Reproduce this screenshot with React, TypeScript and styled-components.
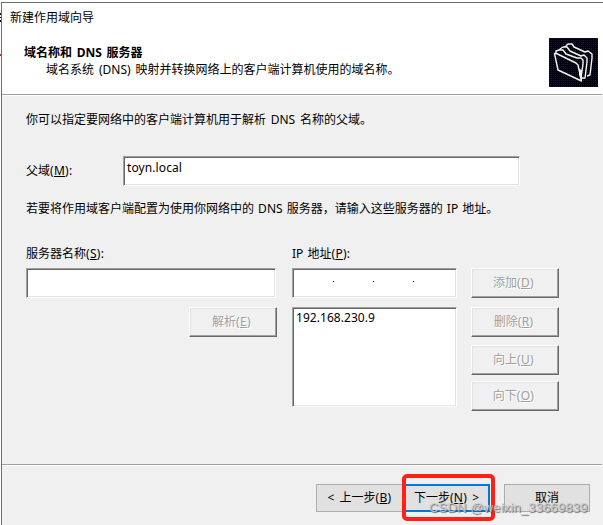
import React from "react";
import styled, { createGlobalStyle, css } from "styled-components";

const GlobalStyle = createGlobalStyle`
  html, body { margin: 0; padding: 0; overflow: hidden; background: #fff; }
  *, *::before, *::after { box-sizing: border-box; }
`;

const Screen = styled.div`
  position: relative;
  display: flex;
  width: 603px;
  height: 525px;
  overflow: hidden;
  background: #fff;
  color: #000;
  font: 12px/16px "Noto Sans", "Noto Sans CJK SC", sans-serif;
  white-space: nowrap;
`;

const Backdrop = styled.div`
  flex: none;
  width: 1px;
  padding-top: 13px;
`;

const BackdropMark = styled.div<{ $height: number; $color: string; $gap: number }>`
  height: ${(p) => p.$height}px;
  margin-bottom: ${(p) => p.$gap}px;
  background: ${(p) => p.$color};
`;

const Dialog = styled.div`
  display: flex;
  flex-direction: column;
  flex: 1;
  margin-top: 2px;
  border-top: 1px solid #6e6e72;
  border-left: 1px solid #6e6e72;
  background: #f0f0f0;
`;

const Header = styled.header`
  display: flex;
  justify-content: space-between;
  height: 91px;
  padding-right: 5px;
  background: #fff;
`;

const HeaderText = styled.div`
  padding: 7px 0 0 8px;
`;

const Line = styled.div<{ $spacing?: number }>`
  height: 16px;
  word-spacing: ${(p) => p.$spacing ?? 0}px;
`;

const Heading = styled(Line)`
  margin: 19px 0 0 14px;
  font-weight: 700;
`;

const Subtitle = styled(Line)`
  margin: 1px 0 0 36px;
`;

const FolderIcon = styled.svg`
  margin-top: 35px;
`;

const Rule = styled.div`
  flex: none;
  height: 2px;
  margin-right: 1px;
  border-top: 1px solid #a0a0a0;
  border-bottom: 1px solid #fff;
`;

const Body = styled.main`
  height: 368px;
  padding: 16px 0 0 24px;
`;

const ParentRow = styled.div`
  display: flex;
  height: 30px;
  margin: 28px 0 15px;
`;

const ParentLabel = styled.div`
  width: 97px;
  padding-top: 7px;
`;

const sunken = css`
  border: 1px solid;
  border-color: #a0a0a0 #fff #fff #a0a0a0;
  box-shadow: inset 1px 1px #696969, inset -1px -1px #e3e3e3;
  background: #fff;
`;

const Field = styled.div<{ $width: number; $height?: number }>`
  ${sunken}
  width: ${(p) => p.$width}px;
  height: ${(p) => p.$height ?? 30}px;
  padding: 3px 3px;
`;

const ParentField = styled(Field)`
  letter-spacing: 0.1px;
`;

const Servers = styled.div`
  display: grid;
  grid-template-columns: 251px 165px 88px;
  column-gap: 15px;
  margin-top: 29px;
`;

const Column = styled.div`
  display: flex;
  flex-direction: column;
`;

const ButtonColumn = styled(Column)`
  margin-left: -1px;
`;

const ColumnLabel = styled.div`
  height: 22px;
  word-spacing: 1px;
`;

const AddressField = styled(Field)`
  display: flex;
  gap: 39px;
  padding: 12px 0 0 40px;
`;

const OctetDot = styled.i`
  width: 1px;
  height: 1px;
  background: #000;
`;

const ListBox = styled(Field)`
  margin-top: 9px;
  padding-top: 2px;
  letter-spacing: 0.05px;
`;

const ClassicButton = styled.button<{ $top?: number }>`
  width: 88px;
  height: 30px;
  margin: ${(p) => p.$top ?? 0}px 0 0;
  padding: 0 3px 0 0;
  border: 1px solid;
  border-color: #fff #696969 #696969 #fff;
  box-shadow: inset -1px -1px #a0a0a0, inset 1px 1px #e3e3e3;
  background: #f0f0f0;
  color: #a0a0a0;
  font: inherit;
  text-shadow: 1px 1px #fff;
`;

const ResolveButton = styled(ClassicButton)`
  align-self: flex-end;
`;

const Footer = styled.footer`
  display: flex;
  height: 59px;
  padding: 18px 0 0 314px;
`;

const NavButton = styled.button<{ $primary?: boolean; $gap?: number; $width: number }>`
  width: ${(p) => p.$width}px;
  height: 28px;
  margin: 0 0 0 ${(p) => p.$gap ?? 0}px;
  padding: 0;
  border: ${(p) => (p.$primary ? "2px solid #0078d7" : "1px solid #adadad")};
  background: #e1e1e1;
  color: #000;
  font: inherit;
  word-spacing: 2px;
  white-space: pre;
`;

const HotkeyGroup = styled.span`
  letter-spacing: 0.3px;
`;

const Key = styled.span`
  text-decoration: underline;
  text-underline-offset: 1px;
  text-decoration-thickness: 1px;
`;

const Highlight = styled.div`
  position: absolute;
  left: 402px;
  top: 474px;
  width: 93px;
  height: 47px;
  border: 4px solid #ff2116;
  border-radius: 5px;
`;

const Watermark = styled.div`
  position: absolute;
  left: 429px;
  top: 499px;
  font: 13px/18px "Liberation Sans", sans-serif;
  letter-spacing: 0.18px;
  color: rgba(205, 205, 205, 0.85);
  text-shadow: 1px 1px 1px rgba(80, 80, 80, 0.8);
`;

function Folders() {
  return (
    <FolderIcon width="49" height="49" viewBox="0 0 49 49">
      <defs>
        <pattern id="dither" width="2" height="2" patternUnits="userSpaceOnUse">
          <rect width="2" height="2" fill="#000010" />
          <rect width="1" height="1" fill="#0000f0" />
        </pattern>
      </defs>
      <rect width="49" height="49" fill="url(#dither)" />
      <g fill="url(#dither)" stroke="#f4f4ee" strokeWidth="1.4" strokeLinejoin="round">
        <path d="M16 13V9l3-3h4l2 3 11 5 3-1 4 3v4l-2 17-3 1" />
        <path d="M11 15v-4l3-2h4l3 4 11 5 3-1 3 3v4l-2 16-3 0" />
        <path d="M7 17v-4l3-1h4l3 4 11 4h4l2 2v4l-2 14" />
        <path d="M5.500 15.500h2L27 25l2 2 3.500 16L9 32z" />
      </g>
      <path d="M30 31l3 1v11l-3-6z" fill="#f4f4ee" />
    </FolderIcon>
  );
}

const Label = ({ text, hotkey, suffix }: { text: string; hotkey: string; suffix?: string }) => (
  <>
    {text}
    <HotkeyGroup>(<Key>{hotkey}</Key>){suffix}</HotkeyGroup>
  </>
);

export default function App() {
  return (
    <>
      <GlobalStyle />
      <Screen>
        <Backdrop>
          <BackdropMark $height={2} $gap={2} $color="#111" />
          <BackdropMark $height={1} $gap={2} $color="#111" />
          <BackdropMark $height={2} $gap={32} $color="#111" />
          <BackdropMark $height={2} $gap={0} $color="#a33b10" />
        </Backdrop>
        <Dialog>
          <Header>
            <HeaderText>
              <Line>新建作用域向导</Line>
              <Heading $spacing={1.6}>域名称和 DNS 服务器</Heading>
              <Subtitle $spacing={1.8}>域名系统 (DNS) 映射并转换网络上的客户端计算机使用的域名称。</Subtitle>
            </HeaderText>
            <Folders />
          </Header>
          <Rule />
          <Body>
            <Line $spacing={1.6}>你可以指定要网络中的客户端计算机用于解析 DNS 名称的父域。</Line>
            <ParentRow>
              <ParentLabel><Label text="父域" hotkey="M" suffix=":" /></ParentLabel>
              <ParentField $width={397}>toyn.local</ParentField>
            </ParentRow>
            <Line $spacing={1}>若要将作用域客户端配置为使用你网络中的 DNS 服务器，请输入这些服务器的 IP 地址。</Line>
            <Servers>
              <Column>
                <ColumnLabel><Label text="服务器名称" hotkey="S" suffix=":" /></ColumnLabel>
                <Field $width={250} />
                <ResolveButton disabled $top={9}><Label text="解析" hotkey="E" /></ResolveButton>
              </Column>
              <Column>
                <ColumnLabel>IP <Label text="地址" hotkey="P" suffix=":" /></ColumnLabel>
                <AddressField $width={165}><OctetDot /><OctetDot /><OctetDot /></AddressField>
                <ListBox $width={165} $height={100}>192.168.230.9</ListBox>
              </Column>
              <ButtonColumn>
                <ClassicButton disabled $top={22}><Label text="添加" hotkey="D" /></ClassicButton>
                <ClassicButton disabled $top={9}><Label text="删除" hotkey="R" /></ClassicButton>
                <ClassicButton disabled $top={8}><Label text="向上" hotkey="U" /></ClassicButton>
                <ClassicButton disabled $top={6}><Label text="向下" hotkey="O" /></ClassicButton>
              </ButtonColumn>
            </Servers>
          </Body>
          <Rule />
          <Footer>
            <NavButton $width={87}>{"< "}<Label text="上一步" hotkey="B" /></NavButton>
            <NavButton $width={87} $primary><Label text="下一步" hotkey="N" />{" >"}</NavButton>
            <NavButton $width={86} $gap={14}>取消</NavButton>
          </Footer>
        </Dialog>
        <Highlight />
        <Watermark>CSDN @weixin_33669839</Watermark>
      </Screen>
    </>
  );
}
